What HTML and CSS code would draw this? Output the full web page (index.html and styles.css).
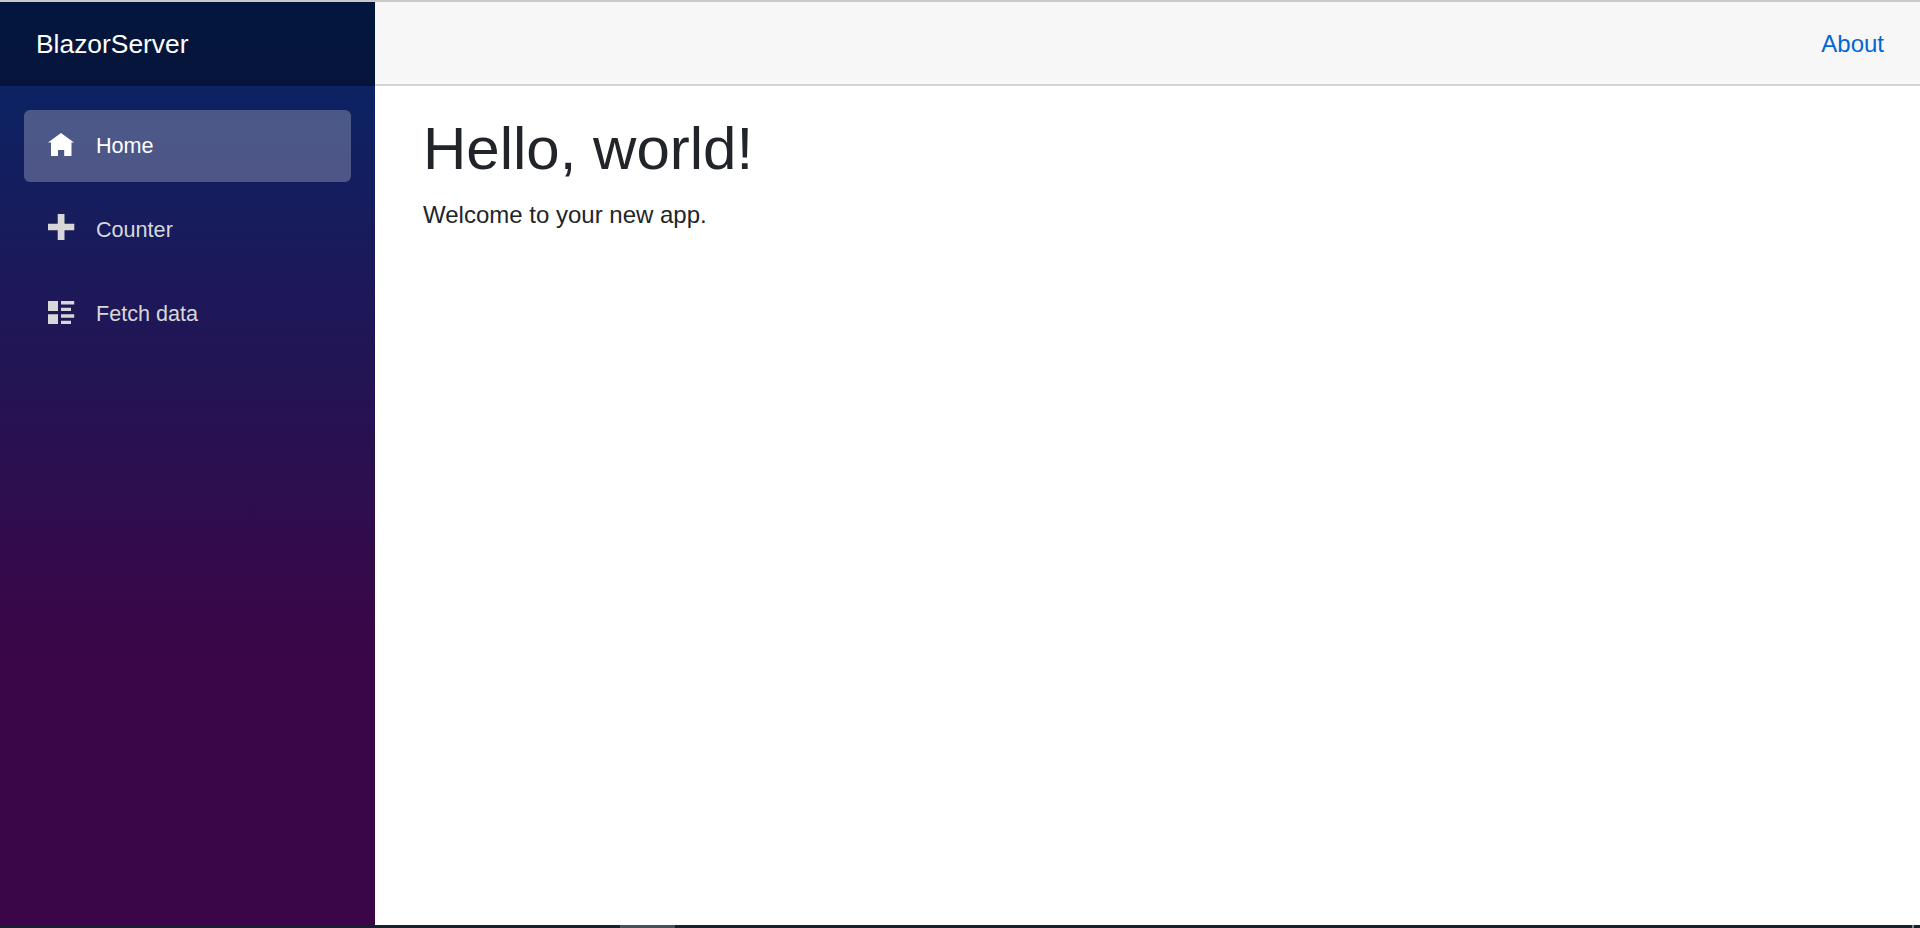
FILE: index.html
```html
<!DOCTYPE html>
<html lang="en">
<head>
<meta charset="utf-8">
<title>BlazorServer</title>
<link rel="stylesheet" href="styles.css">
</head>
<body>
<div class="page">
  <aside class="sidebar">
    <div class="brand-row"><a class="brand">BlazorServer</a></div>
    <nav class="nav">
      <a class="nav-link active">
        <svg class="icon" viewBox="0 0 26 32"><path d="M13 3 L26 12.6 H23.5 V26 H16.2 V20 H10 V26 H3 V12.6 H0 Z"/></svg>
        <span>Home</span>
      </a>
      <a class="nav-link">
        <svg class="icon" viewBox="0 0 26 32"><path d="M9.7 0 H16.5 V9.7 H26.3 V16.3 H16.5 V26 H9.7 V16.3 H0 V9.7 H9.7 Z"/></svg>
        <span>Counter</span>
      </a>
      <a class="nav-link">
        <svg class="icon" viewBox="0 0 26 32"><path d="M0 3 H10 V13 H0 Z M0 16.2 H10 V26 H0 Z M13 3 H26.2 V6.6 H13 Z M13 9.8 H23 V13 H13 Z M13 16.2 H26.2 V19.7 H13 Z M13 22.8 H23 V26 H13 Z"/></svg>
        <span>Fetch data</span>
      </a>
    </nav>
  </aside>
  <main class="main">
    <header class="top-row"><a class="about">About</a></header>
    <article class="content">
      <h1 class="title">Hello, world!</h1>
      <p class="lead">Welcome to your new app.</p>
    </article>
  </main>
</div>
<footer class="taskbar"><span class="task"></span><span class="edge"></span></footer>
</body>
</html>
```
FILE: styles.css
```css
* { box-sizing: border-box; }
body {
  margin: 0;
  height: 928px;
  display: flex;
  flex-direction: column;
  overflow: hidden;
  border-top: 2px solid #cacaca;
  background: #fff;
  color: #212529;
  font: 24px/36px "Liberation Sans", Arial, sans-serif;
}
.page { flex: 1; display: flex; min-height: 0; }
.sidebar {
  width: 375px;
  background: linear-gradient(180deg, rgb(5, 39, 103) 0%, #3a0647 70%);
}
.brand-row {
  height: 84px;
  padding-left: 36px;
  display: flex;
  align-items: center;
  background: rgba(0, 0, 0, 0.4);
}
.brand { color: #fff; font-size: 26.4px; }
.nav {
  display: flex;
  flex-direction: column;
  gap: 12px;
  padding: 24px;
}
.nav-link {
  height: 72px;
  padding: 0 24px;
  display: flex;
  align-items: center;
  gap: 22px;
  border-radius: 6px;
  color: #d7d7d7;
  font-size: 21.6px;
}
.active { background: rgba(255, 255, 255, 0.25); color: #fff; }
.icon { width: 26px; height: 32px; fill: currentColor; overflow: visible; }
.main { flex: 1; }
.top-row {
  height: 84px;
  padding: 2px 36px 0 0;
  display: flex;
  align-items: center;
  justify-content: flex-end;
  background: #f7f7f7;
  border-bottom: 2px solid #d6d5d5;
}
.about { color: #0366d6; }
.content { padding: 27.4px 36px 0 48px; }
.title { margin: 0 0 12px; font-size: 60px; line-height: 72px; font-weight: 500; }
.lead { margin: 0; }
.taskbar {
  height: 3px;
  padding: 0 6px 0 620px;
  display: flex;
  justify-content: space-between;
  background: #17212d;
}
.task { width: 55px; background: #49525c; }
.edge { width: 2px; background: #7d848c; }
```
